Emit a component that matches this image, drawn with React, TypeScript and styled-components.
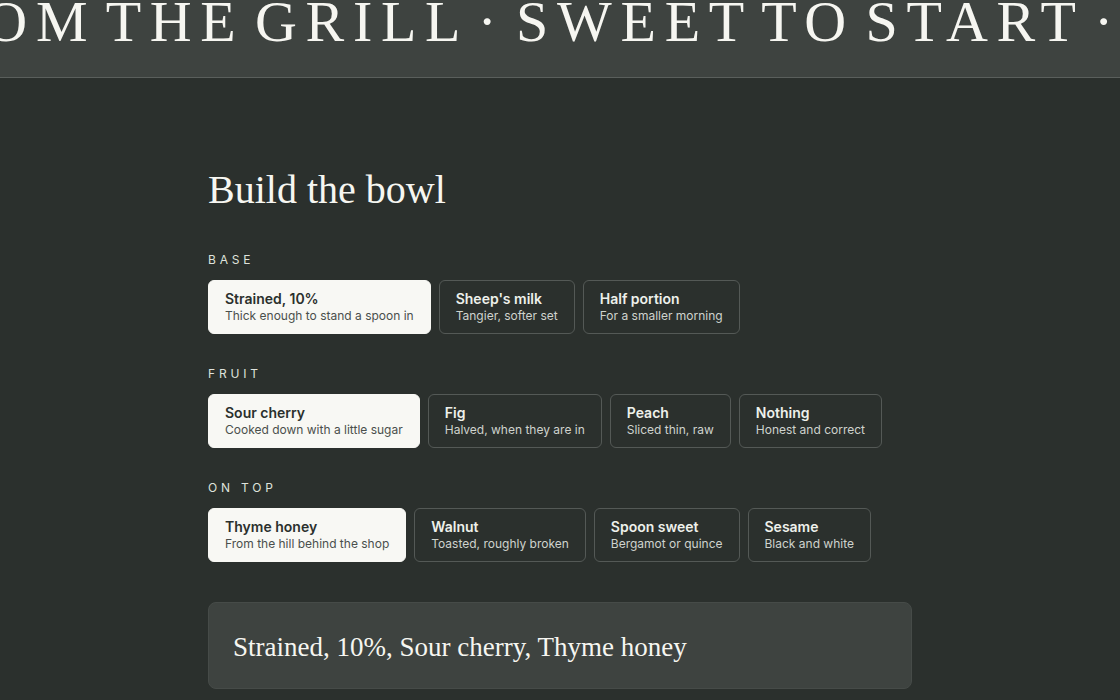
import React, { useState } from "react";
import styled, { createGlobalStyle } from "styled-components";

const Global = createGlobalStyle`
  html, body { margin: 0; padding: 0; background: #2b302d; }
  body { font-family: Inter, "Noto Sans", sans-serif; color: #eef0eb; }
  * { box-sizing: border-box; }
`;

const Page = styled.div`
  min-height: 700px;
  background: #2b302d;
  overflow: hidden;
`;

const Band = styled.div`
  height: 78px;
  background: #3e4340;
  border-bottom: 1px solid #5a5f5c;
  overflow: hidden;
`;

const Track = styled.div`
  display: flex;
  white-space: nowrap;
  transform: translateX(-103px);
  font-family: "Liberation Serif", "Times New Roman", serif;
  font-size: 58px;
  line-height: 58px;
  letter-spacing: 8.7px;
  word-spacing: -12.7px;
  color: #f6f6f1;
  margin-top: -7px;
`;

const Main = styled.main`
  width: 704px;
  margin: 0 auto;
  padding-top: 90px;
`;

const Heading = styled.h1`
  margin: 0 0 40px;
  font-family: "Liberation Serif", "Times New Roman", serif;
  font-weight: 400;
  font-size: 40px;
  line-height: 44px;
  color: #f6f6f1;
`;

const Section = styled.section`
  margin-bottom: 32px;
`;

const Label = styled.div`
  font-size: 12px;
  line-height: 16px;
  letter-spacing: 0.32em;
  text-transform: uppercase;
  color: #dfe2dc;
  margin-bottom: 12px;
`;

const Options = styled.div`
  display: flex;
  gap: 8px;
`;

const Card = styled.button<{ $on: boolean }>`
  display: flex;
  flex-direction: column;
  align-items: flex-start;
  text-align: left;
  padding: 9px 16px;
  border-radius: 6px;
  border: 1px solid ${(p) => (p.$on ? "#f8f8f4" : "#545956")};
  background: ${(p) => (p.$on ? "#f8f8f4" : "transparent")};
  font-family: Inter, "Noto Sans", sans-serif;
  cursor: pointer;
`;

const Title = styled.span<{ $on: boolean }>`
  font-size: 14px;
  line-height: 18px;
  font-weight: 600;
  color: ${(p) => (p.$on ? "#2b302d" : "#eef0eb")};
`;

const Sub = styled.span<{ $on: boolean }>`
  font-size: 12px;
  line-height: 16px;
  color: ${(p) => (p.$on ? "#4a4f4c" : "#cfd3cd")};
  white-space: nowrap;
`;

const Summary = styled.div`
  margin-top: 40px;
  background: #3e4340;
  border: 1px solid #464b48;
  border-radius: 8px;
  padding: 25px 24px 21px;
  font-family: "Liberation Serif", "Times New Roman", serif;
  font-size: 27px;
  line-height: 39px;
  color: #f6f6f1;
`;

type Opt = { t: string; s: string };
const groups: { label: string; opts: Opt[] }[] = [
  {
    label: "Base",
    opts: [
      { t: "Strained, 10%", s: "Thick enough to stand a spoon in" },
      { t: "Sheep's milk", s: "Tangier, softer set" },
      { t: "Half portion", s: "For a smaller morning" },
    ],
  },
  {
    label: "Fruit",
    opts: [
      { t: "Sour cherry", s: "Cooked down with a little sugar" },
      { t: "Fig", s: "Halved, when they are in" },
      { t: "Peach", s: "Sliced thin, raw" },
      { t: "Nothing", s: "Honest and correct" },
    ],
  },
  {
    label: "On top",
    opts: [
      { t: "Thyme honey", s: "From the hill behind the shop" },
      { t: "Walnut", s: "Toasted, roughly broken" },
      { t: "Spoon sweet", s: "Bergamot or quince" },
      { t: "Sesame", s: "Black and white" },
    ],
  },
];

export default function App() {
  const [sel, setSel] = useState<number[]>([0, 0, 0]);
  const summary = groups.map((g, i) => g.opts[sel[i]].t).join(", ");
  return (
    <Page>
      <Global />
      <Band>
        <Track>FROM THE GRILL · SWEET TO START · FROM THE GRILL · SWEET TO START ·</Track>
      </Band>
      <Main>
        <Heading>Build the bowl</Heading>
        {groups.map((g, gi) => (
          <Section key={g.label}>
            <Label>{g.label}</Label>
            <Options>
              {g.opts.map((o, oi) => {
                const on = sel[gi] === oi;
                return (
                  <Card
                    key={o.t}
                    $on={on}
                    onClick={() => setSel((s) => s.map((v, k) => (k === gi ? oi : v)))}
                  >
                    <Title $on={on}>{o.t}</Title>
                    <Sub $on={on}>{o.s}</Sub>
                  </Card>
                );
              })}
            </Options>
          </Section>
        ))}
        <Summary>{summary}</Summary>
      </Main>
    </Page>
  );
}
